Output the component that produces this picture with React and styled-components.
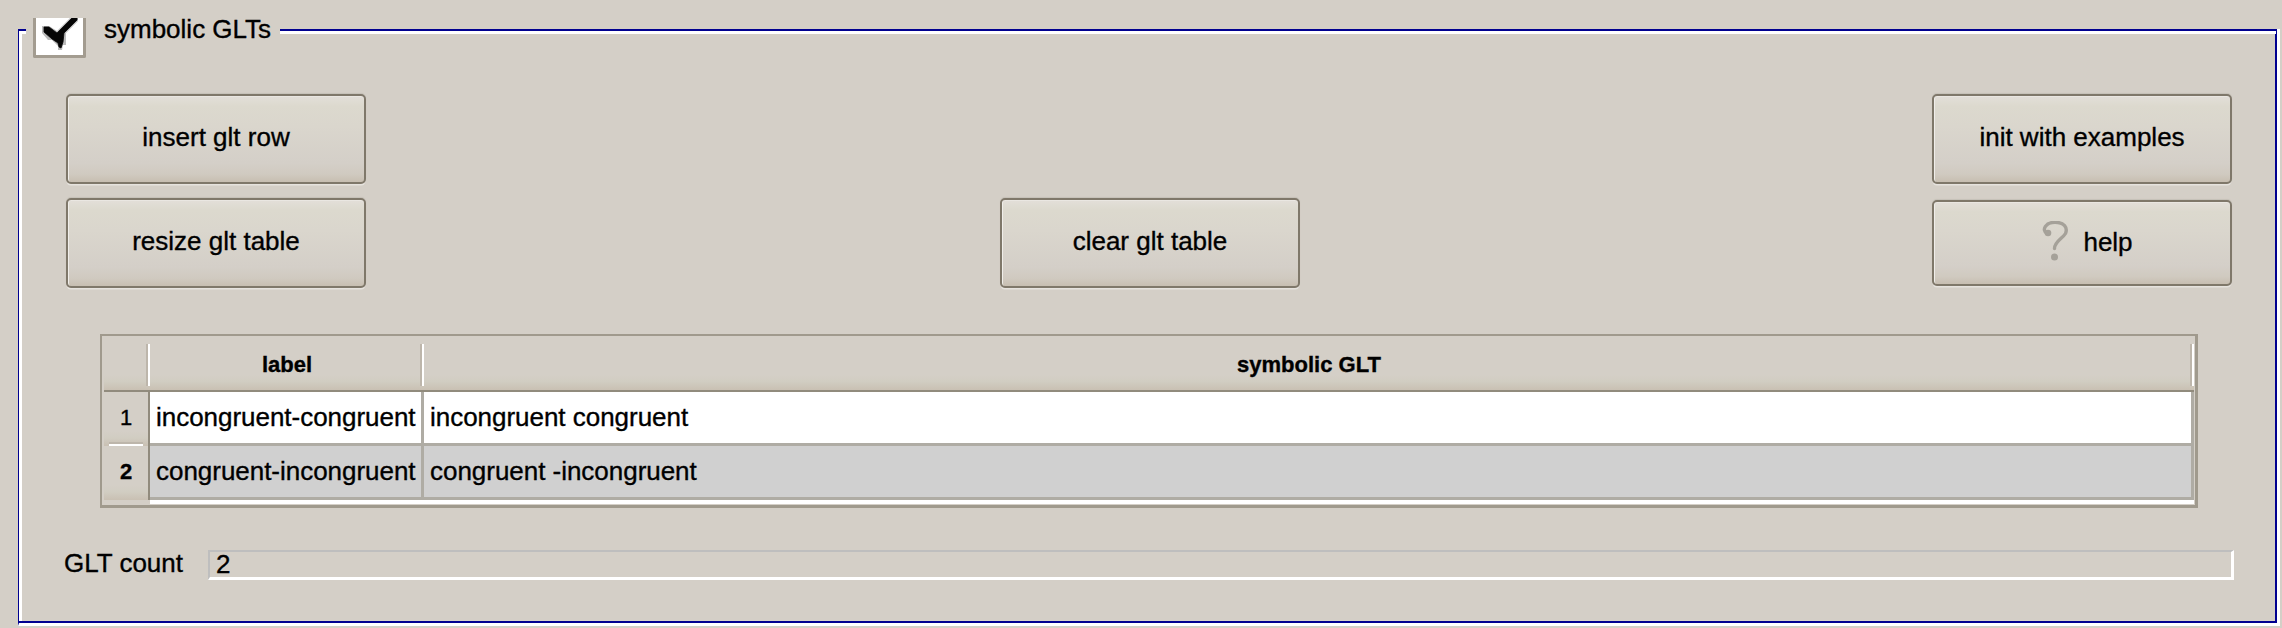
import React from "react";
import styled, { createGlobalStyle } from "styled-components";

const c = {
  bg: "#d4cfc7",
  navy: "#000090",
  edge: "#7f786a",
  frame: "#a09a8d",
  grid: "#afaca4",
};

const Global = createGlobalStyle`
  * { box-sizing: border-box; }
  html, body { margin: 0; background: ${c.bg}; }
  body {
    font: 26px/30px "Liberation Sans", Arial, sans-serif;
    color: #000;
    -webkit-text-stroke: 0.35px #000;
  }
`;

const Page = styled.main`
  width: 2282px;
  height: 628px;
  padding: 18px 2px 2px 18px;
  background: ${c.bg};
`;

const Group = styled.section`
  display: flex;
  flex-direction: column;
  width: 2262px;
  height: 608px;
`;

const TitleBar = styled.header`
  display: flex;
  height: 40px;
  flex: none;
`;

const Corner = styled.div`
  width: 8px;
  height: 29px;
  margin-top: 11px;
  border-top: 2px solid ${c.navy};
  border-left: 1px solid ${c.navy};
  box-shadow: inset 3px 3px 0 #fff;
`;

const CheckBox = styled.div`
  width: 53px;
  height: 40px;
  margin-left: 7px;
  background: #fff;
  border: 3px solid #a39c90;
  border-top: 0;
  border-radius: 0 0 2px 2px;
  svg { display: block; }
`;

const Title = styled.h1`
  margin: -4px 0 0;
  padding-left: 18px;
  width: 194px;
  font-size: 26px;
  font-weight: 400;
  line-height: 30px;
  white-space: nowrap;
`;

const TitleRule = styled.div`
  flex: 1;
  margin-top: 11px;
  box-shadow: inset -3px 0 0 #fff, inset 0 2px 0 ${c.navy}, inset -4px 0 0 ${c.navy},
    inset 0 5px 0 #fff, inset -5px 0 0 ${c.navy};
`;

const Body = styled.div`
  flex: 1;
  display: flex;
  flex-direction: column;
  padding: 36px 43px 0 44px;
  border-left: 1px solid ${c.navy};
  border-right: 3px solid #fff;
  border-bottom: 3px solid #fff;
  box-shadow: inset -2px -2px 0 ${c.navy}, inset 3px 0 0 #fff;
`;

const Actions = styled.div`
  display: grid;
  grid-template-columns: 300px 300px 300px;
  grid-template-rows: 90px 90px;
  gap: 14px 633px;
  align-items: center;
  width: 2166px;
  margin-left: 3px;
`;

const Button = styled.button`
  grid-column: ${(p) => p.$col};
  display: flex;
  align-items: center;
  justify-content: center;
  gap: 14px;
  width: 300px;
  height: ${(p) => p.$h || 90}px;
  margin-left: ${(p) => (p.$col === 2 ? 1 : 0)}px;
  padding: ${(p) => (p.$icon ? "0 0 2px 10px" : "0 0 4px")};
  font: inherit;
  color: #000;
  -webkit-text-stroke: inherit;
  border: 2px solid ${c.edge};
  border-radius: 5px;
  background: linear-gradient(#e3dfd9 0, #dcd9ce 12%, #dad6cd 35%, #d4cfc8 78%, #d0cac0 91%, #c7beb1 100%);
  box-shadow: 0 2px 0 -0.5px #e6e3de, 0 -1px 1px #c5c0b7,
    inset 2px 0 0 -1px #f0eeea, inset 0 1px 0 #eae7e2;
`;

const HelpIcon = styled.svg`
  width: 28px;
  height: 42px;
  flex: none;
`;

const Table = styled.div`
  display: grid;
  grid-template-columns: 46px 274px 1770px;
  grid-template-rows: 56px 54px 54px;
  width: 2098px;
  height: 174px;
  margin: 46px 0 0 37px;
  padding-left: 2px;
  border: solid ${c.frame};
  border-width: 2px 3px 3px 2px;
`;

const HeadCell = styled.div`
  display: flex;
  justify-content: flex-end;
  align-items: stretch;
  padding: 8px 0 4px;
  font-size: 22px;
  font-weight: 700;
  border-bottom: 2px solid #918b7d;
  background: linear-gradient(${c.bg} 72%, #d1cdc2 84%, #c9c0b3 100%);
`;

const HeadText = styled.span`
  flex: 1;
  display: flex;
  align-items: center;
  justify-content: center;
  padding: 0 0 1px 4px;
`;

const Notch = styled.i`
  width: 4px;
  border-left: 2px solid #bdb6ab;
  border-right: 2px solid #fff;
`;

const RowHead = styled.div`
  display: flex;
  flex-direction: column;
  align-items: center;
  justify-content: space-between;
  padding-top: 11px;
  font-size: 22px;
  font-weight: ${(p) => (p.$bold ? 700 : 400)};
  border-right: 2px solid #918b7d;
  background: linear-gradient(${c.bg} 72%, #d1cdc2 85%, #c9c0b3 100%);
`;

const RowNotch = styled.i`
  width: 34px;
  height: 4px;
  border-top: 2px solid #bdb6ab;
  border-bottom: 2px solid #fff;
`;

const Cell = styled.div`
  padding: 10px 0 0 6px;
  white-space: nowrap;
  letter-spacing: -0.03px;
  background: ${(p) => (p.$alt ? "#d0d0d0" : "#fff")};
  border-right: 3px solid ${c.grid};
  border-bottom: 3px solid ${c.grid};
`;

const TableTail = styled.div`
  grid-column: 2 / 4;
  height: 4px;
  background: #fff;
`;

const CountRow = styled.div`
  display: flex;
  align-items: center;
  margin: 42px 0 0 0;
  height: 30px;
`;

const CountLabel = styled.label`
  width: 145px;
  padding: 0 0 4px 1px;
`;

const CountField = styled.output`
  width: 2026px;
  height: 30px;
  padding-left: 6px;
  line-height: 24px;
  border: solid #fff;
  border-width: 2px 3px 3px 2px;
  border-top-color: #bebebe;
  border-left-color: #bebebe;
`;

const rows = [
  ["incongruent-congruent", "incongruent congruent"],
  ["congruent-incongruent", "congruent -incongruent"],
];

export default function App() {
  return (
    <Page>
      <Global />
      <Group>
        <TitleBar>
          <Corner />
          <CheckBox role="checkbox" aria-checked="true">
            <svg width="47" height="37" viewBox="0 0 47 37">
              <path d="M6 8h7l8 5L34 0h8v3L30 15v12h-3l-1 5h-4v-4l-6-6h-4L6 15z" fill="#777" opacity=".5" />
              <path d="M8 9h5l8 6L36 0h5v2L28 15l-1 9-2 6-2-1-1-4-6-4-8-7z" fill="#050505" stroke="#050505" strokeWidth=".8" />
            </svg>
          </CheckBox>
          <Title>symbolic GLTs</Title>
          <TitleRule />
        </TitleBar>
        <Body>
          <Actions>
            <Button $col={1}>insert glt row</Button>
            <Button $col={3}>init with examples</Button>
            <Button $col={1}>resize glt table</Button>
            <Button $col={2}>clear glt table</Button>
            <Button $col={3} $h={86} $icon>
              <HelpIcon viewBox="0 0 28 42">
                <path
                  d="M6 12.5C0 8.500 5 1.300 14 1.300c9 0 13 5.200 10.500 11.200C21.500 17.500 13.500 20.500 13.500 27.500"
                  fill="none"
                  stroke="#a5a199"
                  strokeWidth="3.4"
                  strokeLinecap="round"
                />
                <circle cx="7" cy="12" r="3.300" fill="#a5a199" />
                <circle cx="13.500" cy="36" r="3.500" fill="#a5a199" />
              </HelpIcon>
              help
            </Button>
          </Actions>
          <Table>
            <HeadCell><Notch /></HeadCell>
            <HeadCell><HeadText>label</HeadText><Notch /></HeadCell>
            <HeadCell><HeadText>symbolic GLT</HeadText><Notch /></HeadCell>
            {rows.map(([label, glt], i) => (
              <React.Fragment key={label}>
                <RowHead $bold={i === 1}>
                  {i + 1}
                  {i === 0 && <RowNotch />}
                </RowHead>
                <Cell $alt={i === 1}>{label}</Cell>
                <Cell $alt={i === 1}>{glt}</Cell>
              </React.Fragment>
            ))}
            <TableTail />
          </Table>
          <CountRow>
            <CountLabel>GLT count</CountLabel>
            <CountField>2</CountField>
          </CountRow>
        </Body>
      </Group>
    </Page>
  );
}
